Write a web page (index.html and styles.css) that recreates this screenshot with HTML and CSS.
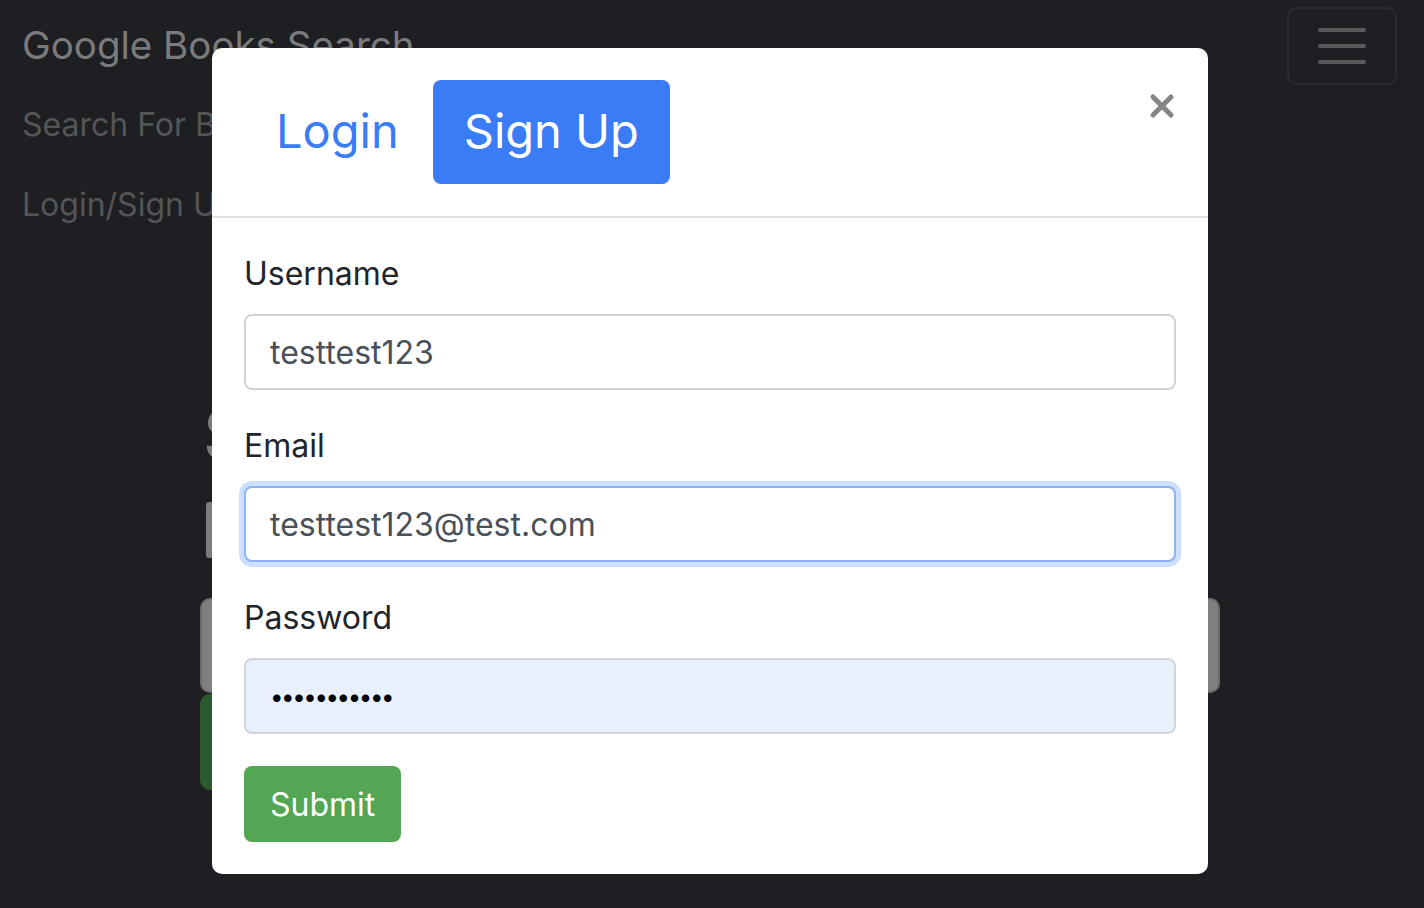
FILE: index.html
```html
<!DOCTYPE html>
<html lang="en">
<head>
<meta charset="utf-8">
<title>Google Books Search</title>
<link rel="stylesheet" href="styles.css">
</head>
<body>
<div class="page">
  <nav class="navbar">
    <div class="navbar-top">
      <a class="brand">Google Books Search</a>
      <button class="toggler" aria-label="Toggle navigation">
        <span class="bar"></span><span class="bar"></span><span class="bar"></span>
      </button>
    </div>
    <ul class="nav-list">
      <li class="nav-item">Search For Books</li>
      <li class="nav-item">Login/Sign Up</li>
    </ul>
  </nav>
  <main class="main">
    <h1 class="page-title">Search for Books</h1>
    <div class="search-input"></div>
    <div class="results-box"></div>
    <div class="green-btn"></div>
  </main>
</div>

<div class="modal">
  <div class="modal-header">
    <div class="tabs">
      <span class="tab">Login</span>
      <span class="tab active">Sign Up</span>
    </div>
    <button class="close" aria-label="Close">
      <svg width="26" height="26" viewBox="0 0 26 26"><path d="M4 4 L22 22 M22 4 L4 22" stroke="#858585" stroke-width="5" stroke-linecap="round" fill="none"/></svg>
    </button>
  </div>
  <form class="modal-body">
    <div class="form-group">
      <label class="label">Username</label>
      <input class="control" type="text" value="testtest123">
    </div>
    <div class="form-group">
      <label class="label">Email</label>
      <input class="control focused" type="text" value="testtest123@test.com">
    </div>
    <div class="form-group">
      <label class="label">Password</label>
      <div class="control autofill"><span class="dots">•••••••••••</span></div>
    </div>
    <button class="submit" type="button">Submit</button>
  </form>
</div>
</body>
</html>
```

FILE: styles.css
```css
* { box-sizing: border-box; }
html, body { margin: 0; padding: 0; }
body {
  width: 1424px;
  height: 908px;
  overflow: hidden;
  background: #1e1f22;
  font-family: Inter, "Liberation Sans", sans-serif;
  position: relative;
}
.navbar { padding: 7px 27px 0 22px; }
.navbar-top { display: flex; justify-content: space-between; align-items: flex-start; }
.brand { margin-top: 8px; font-size: 38.5px; line-height: 60px; color: #7b7b7c; }
.toggler {
  width: 110px; height: 78px;
  border: 2px solid #2b2c2f; border-radius: 10px; background: transparent;
  display: flex; flex-direction: column; align-items: center; justify-content: center; gap: 12px;
  padding: 0;
}
.toggler .bar { width: 48px; height: 4px; border-radius: 2px; background: #58595b; }
.nav-list { list-style: none; margin: 0; padding: 0; }
.nav-item { font-size: 32px; line-height: 48px; padding: 16px 0; color: #545557; }
.main { margin-left: 200px; width: 1020px; }
.page-title { margin: 148px 0 0 3px; font-size: 70px; line-height: 84px; font-weight: 500; color: #7b7b7c; white-space: nowrap; }
.search-input { margin: 25px 0 0 6px; width: 900px; height: 56px; background: #7c7c7d; border-radius: 3px; }
.results-box { margin-top: 40px; height: 95px; background: #7f7f80; border: 2px solid #6c6c6d; border-radius: 10px; }
.green-btn { margin-top: 1px; width: 320px; height: 96px; background: #2a5a2e; border-radius: 10px; }

.modal {
  position: absolute; left: 212px; top: 48px; width: 996px;
  background: #fff; border-radius: 10px;
}
.modal-header {
  display: flex; justify-content: space-between; align-items: flex-start;
  padding: 32px; border-bottom: 2px solid #dee2e6;
}
.tabs { display: flex; gap: 2px; }
.tab {
  height: 104px; line-height: 102px; padding: 0 32px;
  font-size: 47px; color: #3a7cf5; border-radius: 8px; white-space: nowrap;
}
.tab.active { background: #3a7cf5; color: #fff; padding: 0 31px; }
.close { background: none; border: 0; padding: 0; margin: 13px 1px 0 0; width: 26px; height: 26px; display: block; }
.close svg { display: block; }
.modal-body { padding: 32px 32px 32px; margin: 0; }
.form-group { margin-bottom: 32px; }
.label { display: block; font-size: 32px; line-height: 48px; margin-bottom: 16px; color: #212529; }
.control {
  display: block; width: 100%; height: 76px; padding: 0 24px;
  font-family: inherit; font-size: 32px; color: #495057;
  border: 2px solid #ced4da; border-radius: 8px; background: #fff; outline: none;
}
.control.focused { border-color: #8ab4f8; box-shadow: 0 0 0 5px #cddffc; }
.control.autofill { background: #e8f0fe; border-color: #d0d5dc; display: flex; align-items: center; padding-left: 24px; }
.dots { font-size: 24px; letter-spacing: -2.4px; color: #000; }
.submit {
  display: block; height: 76px; padding: 0 26px; border: 0; border-radius: 8px;
  background: #53a653; color: #fff; font-family: inherit; font-size: 32px;
}
```
